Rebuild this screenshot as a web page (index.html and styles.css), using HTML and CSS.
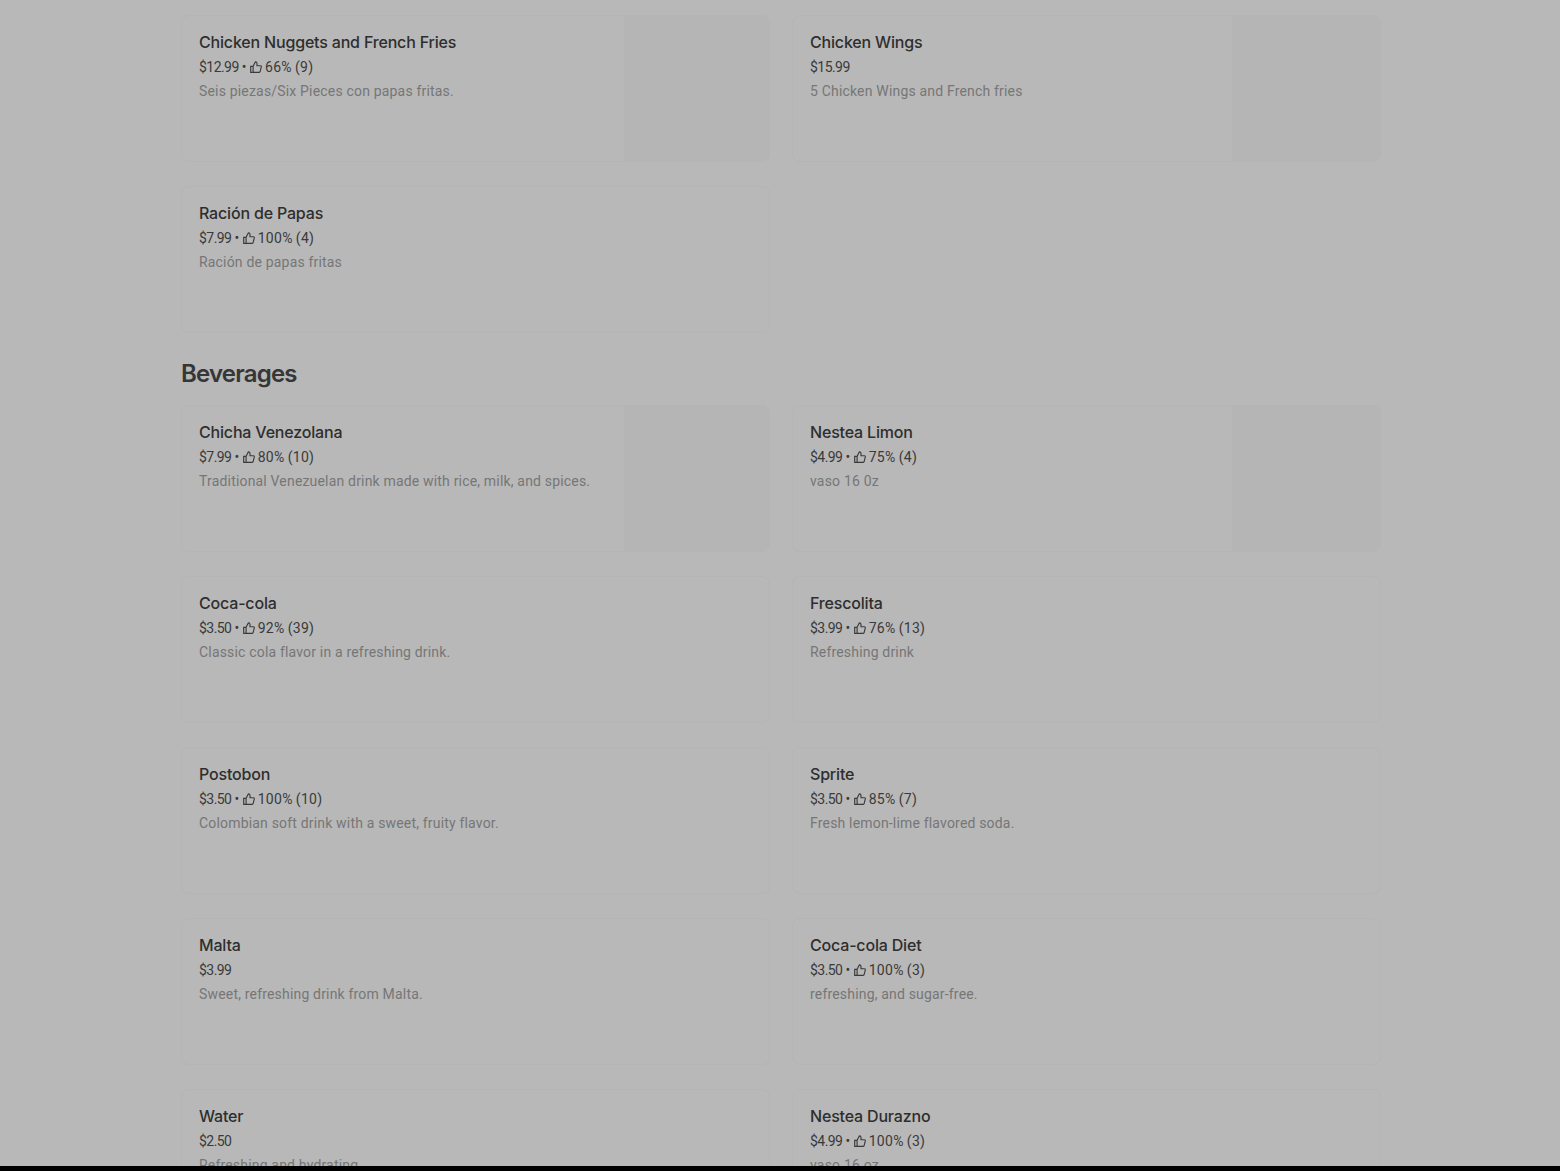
FILE: index.html
```html
<!DOCTYPE html>
<html lang="en">
<head>
  <meta charset="UTF-8">
  <title>Menu</title>
  <link rel="stylesheet" href="styles.css">
</head>
<body>
  <svg width="0" height="0" class="defs">
    <symbol id="thumb" viewBox="0 0 12 12">
      <path d="M0.7 5.3h2.4v6H0.7zM3.1 5.3L5.4 0.8c1 0 1.6 0.7 1.6 1.6v2.3h3.5c0.6 0 1 0.5 0.8 1.1l-1.1 4.6c-0.1 0.5-0.5 0.9-1 0.9H3.1" fill="none" stroke="currentColor" stroke-width="1.15"/>
    </symbol>
  </svg>

  <main class="menu">
    <div class="grid">
      <div class="card">
        <div class="info">
          <div class="name">Chicken Nuggets and French Fries</div>
          <div class="meta"><span class="price">$12.99</span> • <svg class="thumb"><use href="#thumb"/></svg> 66% (9)</div>
          <div class="desc">Seis piezas/Six Pieces con papas fritas.</div>
        </div>
        <div class="photo"></div>
      </div>
      <div class="card">
        <div class="info">
          <div class="name">Chicken Wings</div>
          <div class="meta"><span class="price">$15.99</span></div>
          <div class="desc">5 Chicken Wings and French fries</div>
        </div>
        <div class="photo photo-wide"></div>
      </div>
      <div class="card">
        <div class="info">
          <div class="name">Ración de Papas</div>
          <div class="meta"><span class="price">$7.99</span> • <svg class="thumb"><use href="#thumb"/></svg> 100% (4)</div>
          <div class="desc">Ración de papas fritas</div>
        </div>
      </div>
    </div>

    <h2 class="section-title">Beverages</h2>

    <div class="grid">
      <div class="card">
        <div class="info">
          <div class="name">Chicha Venezolana</div>
          <div class="meta"><span class="price">$7.99</span> • <svg class="thumb"><use href="#thumb"/></svg> 80% (10)</div>
          <div class="desc">Traditional Venezuelan drink made with rice, milk, and spices.</div>
        </div>
        <div class="photo"></div>
      </div>
      <div class="card">
        <div class="info">
          <div class="name">Nestea Limon</div>
          <div class="meta"><span class="price">$4.99</span> • <svg class="thumb"><use href="#thumb"/></svg> 75% (4)</div>
          <div class="desc">vaso 16 0z</div>
        </div>
        <div class="photo photo-wide"></div>
      </div>
      <div class="card">
        <div class="info">
          <div class="name">Coca-cola</div>
          <div class="meta"><span class="price">$3.50</span> • <svg class="thumb"><use href="#thumb"/></svg> 92% (39)</div>
          <div class="desc">Classic cola flavor in a refreshing drink.</div>
        </div>
      </div>
      <div class="card">
        <div class="info">
          <div class="name">Frescolita</div>
          <div class="meta"><span class="price">$3.99</span> • <svg class="thumb"><use href="#thumb"/></svg> 76% (13)</div>
          <div class="desc">Refreshing drink</div>
        </div>
      </div>
      <div class="card">
        <div class="info">
          <div class="name">Postobon</div>
          <div class="meta"><span class="price">$3.50</span> • <svg class="thumb"><use href="#thumb"/></svg> 100% (10)</div>
          <div class="desc">Colombian soft drink with a sweet, fruity flavor.</div>
        </div>
      </div>
      <div class="card">
        <div class="info">
          <div class="name">Sprite</div>
          <div class="meta"><span class="price">$3.50</span> • <svg class="thumb"><use href="#thumb"/></svg> 85% (7)</div>
          <div class="desc">Fresh lemon-lime flavored soda.</div>
        </div>
      </div>
      <div class="card">
        <div class="info">
          <div class="name">Malta</div>
          <div class="meta"><span class="price">$3.99</span></div>
          <div class="desc">Sweet, refreshing drink from Malta.</div>
        </div>
      </div>
      <div class="card">
        <div class="info">
          <div class="name">Coca-cola Diet</div>
          <div class="meta"><span class="price">$3.50</span> • <svg class="thumb"><use href="#thumb"/></svg> 100% (3)</div>
          <div class="desc">refreshing, and sugar-free.</div>
        </div>
      </div>
      <div class="card">
        <div class="info">
          <div class="name">Water</div>
          <div class="meta"><span class="price">$2.50</span></div>
          <div class="desc">Refreshing and hydrating</div>
        </div>
      </div>
      <div class="card">
        <div class="info">
          <div class="name">Nestea Durazno</div>
          <div class="meta"><span class="price">$4.99</span> • <svg class="thumb"><use href="#thumb"/></svg> 100% (3)</div>
          <div class="desc">vaso 16 oz</div>
        </div>
      </div>
    </div>
  </main>

  <div class="bottom-bar"></div>
</body>
</html>
```

FILE: styles.css
```css
html, body {
  height: 100%;
  margin: 0;
  overflow: hidden;
}

body {
  background: #b8b8b8;
  color: #2e2e2e;
  font-family: Roboto, "Liberation Sans", sans-serif;
}

.defs {
  position: absolute;
}

.menu {
  width: 1200px;
  margin: 0 auto;
  padding: 15px 0 0 1px;
}

.grid {
  display: grid;
  grid-template-columns: 589px 589px;
  column-gap: 22px;
  row-gap: 24px;
}

.card {
  display: flex;
  height: 147px;
  box-sizing: border-box;
  border: 1px solid #b5b5b5;
  border-radius: 8px;
  overflow: hidden;
}

.info {
  flex: 1;
  padding: 16px 16px 16px 17.5px;
}

.photo {
  width: 145px;
  background: #b5b5b5;
}

.photo-wide {
  width: 148px;
}

.name {
  font-family: Inter, "Liberation Sans", sans-serif;
  font-size: 16px;
  font-weight: 500;
  letter-spacing: -0.18px;
  line-height: 20px;
}

.meta {
  margin-top: 5px;
  font-size: 14px;
  letter-spacing: 0.3px;
  word-spacing: -0.7px;
  line-height: 20px;
  color: #3a3a3a;
}

.price {
  letter-spacing: -0.55px;
}

.thumb {
  width: 12px;
  height: 12px;
  vertical-align: -1px;
}

.desc {
  margin-top: 4px;
  font-size: 14px;
  letter-spacing: 0.18px;
  line-height: 20px;
  color: #767676;
}

.section-title {
  margin: 0;
  padding: 25px 0 15px 0.5px;
  font-family: Inter, "Liberation Sans", sans-serif;
  font-size: 24px;
  font-weight: 600;
  letter-spacing: -0.8px;
  line-height: 32px;
  color: #363636;
}

.bottom-bar {
  position: fixed;
  left: 0;
  right: 0;
  bottom: 0;
  height: 5px;
  background: #000;
}
```
